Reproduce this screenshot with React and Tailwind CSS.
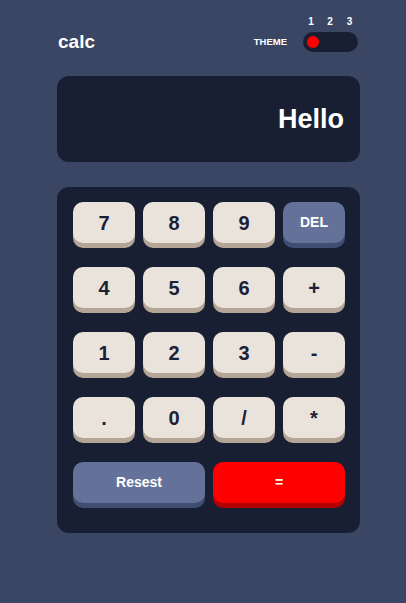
import React, { useState } from 'react';

const KEYS = ['7', '8', '9', 'DEL', '4', '5', '6', '+', '1', '2', '3', '-', '.', '0', '/', '*'];

function Key({ label, onClick }) {
  const isDel = label === 'DEL';
  return (
    <button
      onClick={() => onClick(label)}
      className={
        isDel
          ? 'h-[41px] rounded-[10px] bg-[#647299] text-white text-[14px] font-bold shadow-[0_5px_0_#414e73]'
          : 'h-[41px] rounded-[10px] bg-[#eae3dc] text-[#1b2135] text-[20px] font-bold shadow-[0_5px_0_#b4a597]'
      }
    >
      {label}
    </button>
  );
}

export default function App() {
  const [display, setDisplay] = useState('Hello');
  const [theme] = useState(1);

  const press = (k) => {
    if (k === 'DEL') setDisplay((d) => d.slice(0, -1));
    else setDisplay((d) => (d === 'Hello' ? k : d + k));
  };

  return (
    <div className="min-h-screen bg-[#3a4663] font-['Liberation_Sans',Arial,sans-serif] pt-[15px]">
      <div className="ml-[57px] w-[303px]">
        {/* header */}
        <div className="flex items-end justify-between">
          <div className="pl-[1px] text-[19px] font-bold text-white leading-[20px] h-[20px]">calc</div>
          <div className="flex items-end pr-[2px]">
            <span className="text-[9.5px] font-bold text-white leading-[20px] mr-[16px]">THEME</span>
            <div className="flex flex-col w-[55px]">
              <div className="flex pt-[1px] text-[10px] font-bold text-white leading-[12px] mb-[4px]">
                <span className="w-[16px] text-center">1</span>
                <span className="w-[22px] text-center">2</span>
                <span className="w-[17px] text-center">3</span>
              </div>
              <div className="w-[55px] h-[20px] rounded-full bg-[#181f32] flex items-center px-[4px]">
                <div className="w-[12px] h-[12px] rounded-full bg-[#ff0000]" data-theme={theme} />
              </div>
            </div>
          </div>
        </div>

        {/* display */}
        <div className="mt-[24px] h-[86px] rounded-[12px] bg-[#181f32] flex items-center justify-end pr-4">
          <span className="text-[27px] font-bold text-white">{display}</span>
        </div>

        {/* keypad */}
        <div className="mt-[25px] rounded-[12px] bg-[#181f32] pl-4 pr-[15px] pt-[15px] pb-[30px]">
          <div className="grid grid-cols-4 gap-x-2 gap-y-[24px]">
            {KEYS.map((k) => (
              <Key key={k} label={k} onClick={press} />
            ))}
            <button
              onClick={() => setDisplay('')}
              className="col-span-2 h-[41px] rounded-[10px] bg-[#647299] text-white text-[14px] font-bold shadow-[0_5px_0_#414e73]"
            >
              Resest
            </button>
            <button className="col-span-2 h-[41px] rounded-[10px] bg-[#ff0000] text-white text-[14px] font-bold shadow-[0_5px_0_#b30000]">
              =
            </button>
          </div>
        </div>
      </div>
    </div>
  );
}
